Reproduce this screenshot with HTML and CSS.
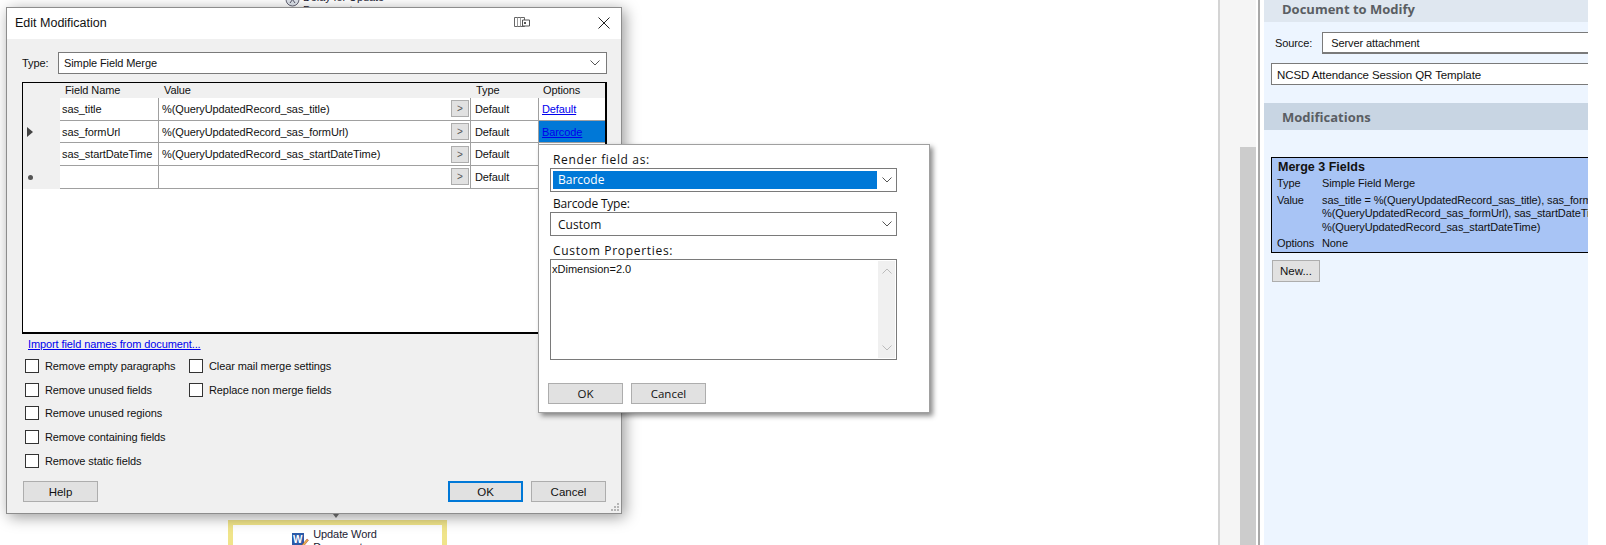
FILE: index.html
```html
<!DOCTYPE html>
<html lang="en">
<head>
<meta charset="utf-8">
<title>Edit Modification</title>
<link rel="stylesheet" href="styles.css">
</head>
<body>
<div class="app">
  <main class="canvas">
    <div class="node node-delay">
      <svg class="delay-icon" width="15" height="15" viewBox="0 0 15 15"><circle cx="7.5" cy="7.5" r="6.5" fill="#dfe4ec" stroke="#667" stroke-width="1"/><path d="M5 4l5 7M10 4l-5 7" stroke="#556" fill="none"/></svg>
      <span>Delay for Update<br>Document</span>
    </div>
    <div class="connector"></div>
    <div class="node-word">
      <svg class="word-icon" width="17" height="16" viewBox="0 0 17 16"><rect x="0" y="1" width="12" height="12" fill="#2b5aa8"/><text x="1" y="11" class="word-w">W</text><path d="M10 13l5-6 1.500 1.200-5 6-2 .6z" fill="#e9b84a" stroke="#a33" stroke-width=".5"/></svg>
      <span>Update Word<br>Document</span>
    </div>
  </main>
  <div class="vscroll"><div class="vscroll-thumb"></div></div>
  <aside class="panel">
    <h2 class="band band-doc">Document to Modify</h2>
    <div class="source-row"><label>Source:</label><div class="field field-source">Server attachment</div></div>
    <div class="field field-doc">NCSD Attendance Session QR Template</div>
    <h2 class="band band-mod">Modifications</h2>
    <div class="card">
      <strong>Merge 3 Fields</strong>
      <div class="card-grid">
        <span>Type</span><span>Simple Field Merge</span>
        <span>Value</span><span class="card-val">sas_title = %(QueryUpdatedRecord_sas_title), sas_formUrl =<br>%(QueryUpdatedRecord_sas_formUrl), sas_startDateTime =<br>%(QueryUpdatedRecord_sas_startDateTime)</span>
        <span>Options</span><span>None</span>
      </div>
    </div>
    <button class="btn btn-new">New...</button>
  </aside>
  <div class="margin"></div>
</div>

<section class="dialog">
  <header class="titlebar">
    <span class="title">Edit Modification</span>
    <svg class="pin" width="16" height="11" viewBox="0 0 16 11"><path d="M.5.500h10v9H.5z" fill="#fff" stroke="#666"/><path d="M3.500.5v9M6.500.5v9" stroke="#999"/><path d="M8.500 3h7v6h-7z" fill="#fff" stroke="#555"/><rect x="10" y="5" width="2" height="2" fill="#555"/></svg>
    <svg class="close" width="12" height="12" viewBox="0 0 12 12"><path d="M.5.500l11 11M11.500.5l-11 11" stroke="#222" fill="none"/></svg>
  </header>
  <div class="dialog-body">
    <div class="type-row">
      <label>Type:</label>
      <div class="combo combo-type"><span>Simple Field Merge</span><svg class="chev" width="10" height="6" viewBox="0 0 10 6"><path d="M.5.500l4.500 4.500 4.500-4.500" fill="none" stroke="#555"/></svg></div>
    </div>
    <div class="grid">
      <div class="ghead"></div><div class="ghead">Field Name</div><div class="ghead gspan">Value</div><div class="ghead">Type</div><div class="ghead ghead-opt">Options</div>

      <div class="rhead"></div><div class="cell">sas_title</div>
      <div class="cell cell-val"><span>%(QueryUpdatedRecord_sas_title)</span><button class="gbtn">&gt;</button></div>
      <div class="cell">Default</div><div class="cell cell-last"><a href="#">Default</a></div>

      <div class="rhead"><i class="tri"></i></div><div class="cell">sas_formUrl</div>
      <div class="cell cell-val"><span>%(QueryUpdatedRecord_sas_formUrl)</span><button class="gbtn">&gt;</button></div>
      <div class="cell">Default</div><div class="cell cell-last cell-sel"><a href="#">Barcode</a></div>

      <div class="rhead"></div><div class="cell">sas_startDateTime</div>
      <div class="cell cell-val"><span>%(QueryUpdatedRecord_sas_startDateTime)</span><button class="gbtn">&gt;</button></div>
      <div class="cell">Default</div><div class="cell cell-last"></div>

      <div class="rhead"><i class="star"></i></div><div class="cell"></div>
      <div class="cell cell-val"><span></span><button class="gbtn">&gt;</button></div>
      <div class="cell">Default</div><div class="cell cell-last"></div>
    </div>
    <a class="import" href="#">Import field names from document...</a>
    <div class="checks">
      <div class="check-col check-col-a">
        <div class="check"><i></i>Remove empty paragraphs</div>
        <div class="check"><i></i>Remove unused fields</div>
        <div class="check"><i></i>Remove unused regions</div>
        <div class="check"><i></i>Remove containing fields</div>
        <div class="check"><i></i>Remove static fields</div>
      </div>
      <div class="check-col">
        <div class="check"><i></i>Clear mail merge settings</div>
        <div class="check"><i></i>Replace non merge fields</div>
      </div>
    </div>
    <footer class="dialog-foot">
      <button class="btn btn-dlg">Help</button>
      <div class="foot-right">
        <button class="btn btn-dlg btn-default">OK</button>
        <button class="btn btn-dlg">Cancel</button>
      </div>
    </footer>
    <svg class="grip" width="10" height="10" viewBox="0 0 10 10"><path d="M7 1h2v2H7zM4 4h2v2H4zM7 4h2v2H7zM1 7h2v2H1zM4 7h2v2H4zM7 7h2v2H7z" fill="#b5b5b5"/></svg>
  </div>
</section>

<section class="popup">
  <div class="plabel plabel-render">Render field as:</div>
  <div class="pcombo pcombo-sel"><span class="psel">Barcode</span><svg class="chev" width="10" height="6" viewBox="0 0 10 6"><path d="M.5.500l4.500 4.500 4.500-4.500" fill="none" stroke="#555"/></svg></div>
  <div class="plabel plabel-next plabel-type">Barcode Type:</div>
  <div class="pcombo"><span class="pplain">Custom</span><svg class="chev" width="10" height="6" viewBox="0 0 10 6"><path d="M.5.500l4.500 4.500 4.500-4.500" fill="none" stroke="#555"/></svg></div>
  <div class="plabel plabel-props">Custom Properties:</div>
  <div class="ptext">
    <div class="ptext-val">xDimension=2.0</div>
    <div class="pbar">
      <svg width="10" height="6" viewBox="0 0 10 6"><path d="M.5 5.500l4.500-4.500 4.500 4.500" fill="none" stroke="#bbb"/></svg>
      <svg width="10" height="6" viewBox="0 0 10 6"><path d="M.5.500l4.500 4.500 4.500-4.500" fill="none" stroke="#bbb"/></svg>
    </div>
  </div>
  <div class="pfoot">
    <button class="btn btn-dlg">OK</button>
    <button class="btn btn-dlg">Cancel</button>
  </div>
</section>
</body>
</html>
```
FILE: styles.css
```css
* { box-sizing: border-box; }
html, body { margin: 0; padding: 0; }
body {
  position: relative;
  width: 1606px;
  height: 545px;
  overflow: hidden;
  background: #fff;
  font-family: "Liberation Sans", Arial, sans-serif;
  font-size: 11px;
  letter-spacing: -0.1px;
  color: #111;
}
.app { display: flex; height: 545px; }
.canvas { position: relative; width: 1218px; background: #fff; overflow: hidden; }
.vscroll {
  width: 40px;
  border-left: 2px solid #d4d4d4;
  border-right: 2px solid #fff;
  background: #f5f5f5;
  padding-left: 20px;
  display: flex;
  flex-direction: column;
}
.vscroll-thumb { margin-top: 147px; flex: 1; background: #ccc; }
.panel {
  width: 330px;
  border-left: 2px solid #a8a8a8;
  box-shadow: inset 4px 0 0 #fff;
  padding-left: 4px;
  background: #edf5ff;
  overflow: hidden;
  flex: none;
  position: relative;
}
.margin { flex: 1; background: #fff; }

/* canvas nodes */
.node-delay {
  position: absolute; left: 285px; top: -9px;
  display: flex; gap: 3px; line-height: 13px; font-size: 11px; color: #223;
}
.delay-icon { margin-top: 1px; }
.connector {
  position: absolute; left: 333px; top: 514px;
  border: 3px solid transparent; border-top: 4px solid #777;
}
.node-word {
  position: absolute; left: 228px; top: 520px;
  width: 219px; height: 60px;
  border: 5px solid #f0e48a;
  background: #fff;
  display: flex; justify-content: center; gap: 4px;
  padding: 3px 6px 0 0;
  line-height: 13px; font-size: 11px; color: #223;
}
.word-icon { margin-top: 4px; }
.word-w { font: bold 10px "Liberation Sans", sans-serif; fill: #fff; }

/* side panel */
.band { margin: 0; font-size: 13px; font-weight: bold; color: #5a5e63; padding-left: 18px; letter-spacing: 0; font-family: "Open Sans", "Liberation Sans", sans-serif; display: flex; align-items: center; }
.band-doc { height: 22px; background: #dfe7f0; padding-bottom: 4px; }
.band-mod { height: 27px; background: #c8d5e3; margin-top: 18px; }
.source-row { display: flex; align-items: center; padding: 10px 0 0 11px; gap: 10px; }
.field { background: #fff; border: 1px solid #7a7a7a; height: 22px; display: flex; align-items: center; white-space: nowrap; }
.field-source { width: 280px; border-width: 1px 0 2px 1px; padding-left: 8px; }
.field-doc { margin: 9px 0 0 7px; padding: 1px 0 0 5px; font-size: 11.500px; border-right: 0; }
.card {
  margin: 27px 0 0 7px;
  height: 96px; width: 340px;
  background: #a8c4f5;
  border: 1px solid #000;
  padding: 3px 0 0 6px;
  line-height: 13.400px;
  white-space: nowrap;
}
.card strong { font-size: 12.500px; letter-spacing: 0; font-family: "Liberation Sans", sans-serif; display: block; margin-bottom: 3px; }
.card-grid { display: grid; grid-template-columns: 44px 1fr; row-gap: 3px; }
.card-grid > :nth-child(odd) { margin-left: -1px; }
.btn-new { margin: 7px 0 0 8px; width: 48px; height: 22px; display: block; }

/* buttons */
.btn {
  background: #e1e1e1;
  border: 1px solid #adadad;
  font-family: "Liberation Sans", Arial, sans-serif;
  font-size: 11.500px;
  color: #111;
  padding: 0;
}

/* dialog */
.dialog {
  position: absolute; left: 6px; top: 7px;
  width: 616px; height: 507px;
  border: 1px solid #8d8d8d;
  background: #f0f0f0;
  box-shadow: 3px 3px 14px rgba(0,0,0,.4);
  display: flex; flex-direction: column;
}
.titlebar { height: 31px; background: #fff; display: flex; align-items: center; padding: 0 11px 0 8px; flex: none; }
.title { flex: 1; font-size: 12.500px; letter-spacing: 0; margin-top: -1px; }
.pin { margin-right: 68px; margin-top: -2px; }
.close { margin-top: -2px; }
.dialog-body { position: relative; flex: 1; padding: 13px 14px 0 15px; }
.type-row { display: flex; align-items: center; gap: 9px; }
.type-row label { width: 27px; }
.combo {
  flex: 1; height: 22px; background: #fff; border: 1px solid #7a7a7a;
  display: flex; align-items: center; justify-content: space-between;
  padding: 0 6px 0 5px;
}
.chev { flex: none; }
.grid {
  margin-top: 8px;
  width: 585px;
  height: 252px;
  background: #fff;
  border: 1px solid #000;
  border-width: 1px 2px 2px 1px;
  display: grid;
  grid-template-columns: 37px 99px 312px 68px 1fr;
  grid-template-rows: 15px repeat(4, 22.700px);
  align-content: start;
}
.ghead { background: #f0f0f0; padding-left: 5px; line-height: 15px; }
.ghead-opt { padding-left: 4px; }
.rhead { background: #f0f0f0; display: flex; align-items: center; padding-left: 4px; }
.tri { border: 5px solid transparent; border-left: 6px solid #444; border-right: 0; }
.star { width: 5px; height: 5px; border-radius: 50%; background: #555; margin-left: 1px; }
.cell {
  border-right: 1px solid #a0a0a0;
  border-bottom: 1px solid #a0a0a0;
  padding-left: 2px;
  display: flex; align-items: center;
  white-space: nowrap;
}
.cell-val { justify-content: space-between; padding-right: 1px; padding-left: 3px; }
.cell:nth-child(5n+4) { padding-left: 4px; }
.cell-last { border-right: 0; padding-left: 3px; }
.cell-sel { background: #0078d7; }
.grid a { color: #0000ee; text-decoration: underline; }
.gbtn {
  width: 18px; height: 17px;
  background: #e1e1e1; border: 1px solid #adadad;
  font: 10px "Liberation Sans", sans-serif; color: #555; padding: 0;
}
.import {
  display: block; margin: 4px 0 0 6px; color: #0000ee; text-decoration: underline; line-height: 13px;
}
.checks { display: flex; margin: 3px 0 0 3px; }
.check-col { display: flex; flex-direction: column; }
.check-col-a { width: 164px; }
.check { display: flex; align-items: center; height: 23.700px; gap: 6px; white-space: nowrap; }
.check i { width: 14px; height: 14px; background: #fff; border: 1px solid #333; flex: none; }
.dialog-foot {
  position: absolute; left: 16px; right: 15px; bottom: 11px;
  display: flex; justify-content: space-between;
}
.foot-right { display: flex; gap: 8px; }
.btn-dlg { width: 75px; height: 21px; }
.btn-default { border: 2px solid #0078d7; }
.grip { position: absolute; right: 1px; bottom: 1px; }

/* popup */
.popup {
  position: absolute; left: 538px; top: 144px;
  width: 392px; height: 269px;
  background: #fff;
  border: 1px solid #a0a0a0;
  box-shadow: 3px 3px 5px rgba(0,0,0,.45);
  padding: 7px 0 0 11px;
  font-family: "Open Sans", "Noto Sans", sans-serif;
  font-size: 12px;
  letter-spacing: 0;
  color: #111;
}
.plabel { line-height: 16px; height: 16px; padding-left: 3px; white-space: nowrap; }
.plabel-render { letter-spacing: .65px; }
.plabel-type { letter-spacing: -.2px; }
.plabel-props { margin-top: 7px; letter-spacing: .7px; }
.plabel-next { margin-top: 4px; }
.pcombo {
  width: 347px; height: 24px;
  border: 1px solid #7a7a7a;
  display: flex; align-items: center;
  padding-right: 4px;
}
.pcombo-sel { padding-left: 2px; }
.psel {
  background: #0078d7; color: #fff; flex: 1; height: 18px; line-height: 17px;
  padding-left: 5px; margin-right: 5px;
}
.pplain { flex: 1; padding-left: 7px; }
.ptext {
  width: 347px; height: 101px;
  border: 1px solid #7a7a7a;
  display: flex; justify-content: space-between;
  padding: 1px;
}
.ptext-val { font-family: "Liberation Sans", sans-serif; font-size: 11px; line-height: 16px; }
.pbar {
  width: 17px; background: #f0f0f0;
  display: flex; flex-direction: column; justify-content: space-between; align-items: center;
  padding: 7px 0;
}
.pfoot { display: flex; gap: 8px; margin: 23px 0 0 -2px; }
.pfoot .btn { font-family: "Open Sans", sans-serif; }
```
